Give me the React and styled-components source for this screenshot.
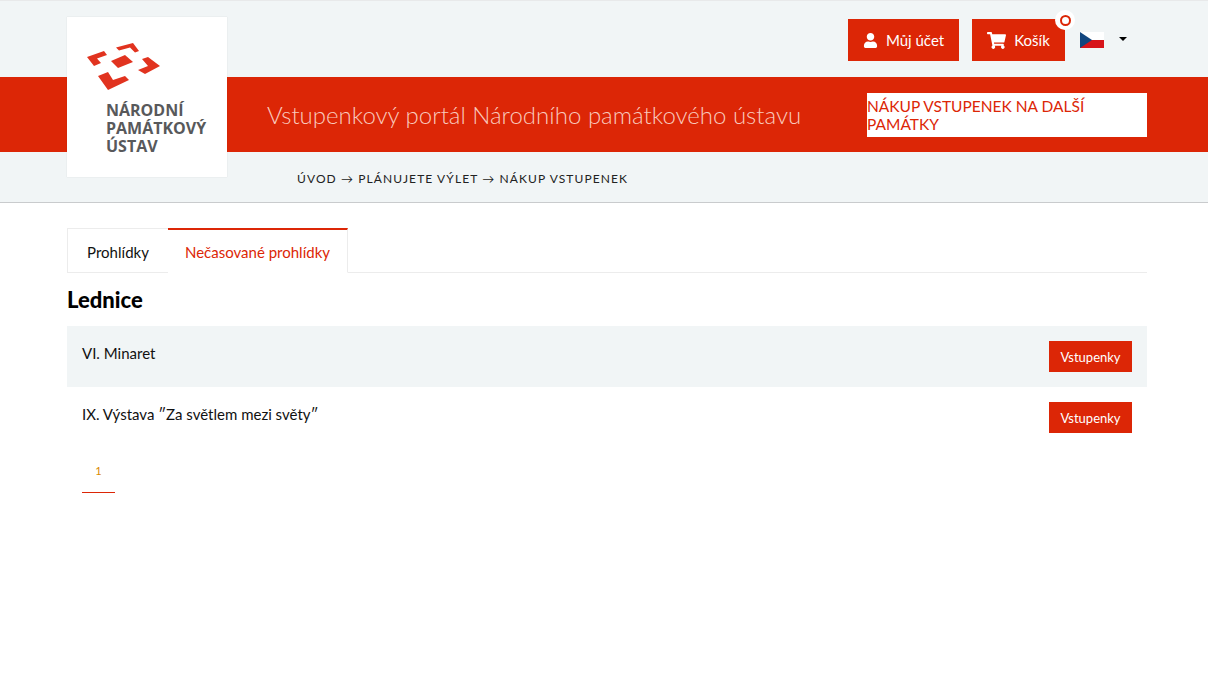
import React from "react";
import styled, { createGlobalStyle } from "styled-components";
import { FaUser, FaShoppingCart } from "react-icons/fa";

const RED = "#dc2606";
const PALE = "#f1f5f6";

const Global = createGlobalStyle`
  html, body { margin: 0; padding: 0; background: #fff; }
  body { font-family: "Lato", "Liberation Sans", sans-serif; color: #000; min-height: 680px; }
  * { box-sizing: border-box; }
`;

const Header = styled.header`
  position: relative;
  background: ${PALE};
  border-top: 1px solid #e8e9ea;
  border-bottom: 1px solid #c9cbcd;
  height: 203px;
`;
const Container = styled.div`
  width: 1080px;
  margin-left: 67px;
`;
const TopRow = styled(Container)`
  height: 76px;
  display: flex;
  justify-content: flex-end;
  padding-top: 18px;
`;
const Action = styled.a`
  height: 42px;
  background: ${RED};
  color: #fff;
  display: flex;
  align-items: center;
  font-size: 15px;
  gap: 8px;
  position: relative;
  padding: 0 15px;
  margin-right: ${(p) => p.$mr}px;
  svg { display: block; }
`;
const Badge = styled.span`
  position: absolute;
  top: -9px;
  right: -10px;
  width: 20px;
  height: 20px;
  border-radius: 50%;
  background: #fff;
  display: flex;
  align-items: center;
  justify-content: center;
  &::after {
    content: "";
    width: 7px;
    height: 7px;
    border-radius: 50%;
    border: 2px solid ${RED};
  }
`;
const Lang = styled.div`
  width: 52px;
  margin-right: 15px;
  display: flex;
  align-items: center;
  height: 42px;
  position: relative;
  gap: 15px;
  margin-right: 15px;
`;
const Caret = styled.span`
  width: 0;
  height: 0;
  border-left: 4px solid transparent;
  border-right: 4px solid transparent;
  border-top: 4px solid #000;
  margin-top: -2px;
`;
const Band = styled.div`
  background: ${RED};
  height: 75px;
`;
const BandInner = styled(Container)`
  height: 75px;
  display: flex;
  align-items: center;
  justify-content: space-between;
  padding-left: 200px;
`;
const Title = styled.h1`
  margin: 0;
  font-size: 24px;
  font-weight: 300;
  color: #f9c9bd;
`;
const OtherButton = styled.a`
  width: 280px;
  height: 44px;
  background: #fff;
  color: ${RED};
  font-size: 15.5px;
  display: flex;
  align-items: center;
  justify-content: center;
`;
const Crumbs = styled(Container)`
  padding: 20px 0 0 230px;
  font-size: 12px;
  letter-spacing: 1.1px;
  color: #222;
  line-height: 14px;
  text-transform: uppercase;
`;
const LogoBox = styled.div`
  position: absolute;
  left: 67px;
  top: 16px;
  width: 160px;
  height: 160px;
  background: #fff;
  box-shadow: 0 0 1px rgba(0, 0, 0, 0.15);
`;
const LogoMark = styled.svg`
  position: absolute;
  left: 13px;
  top: 18px;
  display: block;
`;
const LogoText = styled.div`
  position: absolute;
  left: 39px;
  top: 84px;
  font-family: "Open Sans", sans-serif;
  font-weight: 700;
  font-size: 16px;
  line-height: 18px;
  color: #58595b;
  white-space: nowrap;
`;
const Main = styled(Container)`
  padding-top: 25px;
`;
const Tabs = styled.nav`
  display: flex;
  height: 45px;
  border-bottom: 1px solid #ececec;
`;
const Tab = styled.a`
  height: 45px;
  display: flex;
  align-items: center;
  justify-content: center;
  font-size: 15px;
  width: ${(p) => p.$w}px;
  padding-top: 2px;
  border: 1px solid #ececec;
  border-left-width: ${(p) => (p.$active ? 0 : 1)}px;
  border-top: ${(p) => (p.$active ? `2px solid ${RED}` : "1px solid #ececec")};
  border-bottom-color: ${(p) => (p.$active ? "#fff" : "#ececec")};
  border-right-width: ${(p) => (p.$active ? 1 : 0)}px;
  color: ${(p) => (p.$active ? RED : "#111")};
`;
const Heading = styled.h2`
  margin: 0;
  height: 53px;
  display: flex;
  align-items: center;
  font-size: 22px;
  font-weight: 900;
  color: #000;
`;
const Row = styled.div`
  height: 61px;
  padding: 15px;
  display: flex;
  justify-content: space-between;
  align-items: flex-start;
  background: ${(p) => (p.$alt ? PALE : "#fff")};
`;
const RowName = styled.span`
  font-size: 15px;
  line-height: 24px;
  color: #111;
`;
const TicketButton = styled.a`
  width: 83px;
  height: 31px;
  background: ${RED};
  color: #fff;
  font-size: 13px;
  display: flex;
  align-items: center;
  justify-content: center;
`;
const Pager = styled.div`
  margin: 0 0 0 15px;
  width: 33px;
  height: 45px;
  border-bottom: 1px solid ${RED};
  color: #d98a00;
  font-size: 11px;
  display: flex;
  justify-content: center;
  padding-top: 16px;
`;

const Flag = () => (
  <svg width="24" height="16" viewBox="0 0 24 16" style={{ display: "block" }}>
    <rect width="24" height="8" fill="#fff" />
    <rect y="8" width="24" height="8" fill="#d7141a" />
    <path d="M0 0L12 8L0 16Z" fill="#11457e" />
  </svg>
);

export default function App() {
  return (
    <>
      <Global />
      <Header>
        <TopRow>
          <Action $mr={13}>
            <FaUser size={15} />
            Můj účet
          </Action>
          <Action $mr={15}>
            <FaShoppingCart size={19} />
            Košík
            <Badge />
          </Action>
          <Lang>
            <Flag />
            <Caret />
          </Lang>
        </TopRow>
        <Band>
          <BandInner>
            <Title>Vstupenkový portál Národního památkového ústavu</Title>
            <OtherButton>NÁKUP VSTUPENEK NA DALŠÍ PAMÁTKY</OtherButton>
          </BandInner>
        </Band>
        <Crumbs>Úvod → Plánujete výlet → Nákup vstupenek</Crumbs>
        <LogoBox>
          <LogoMark width="81" height="56" viewBox="0 0 81 56">
            <g fill="#e1331f">
              <path d="M7 22L24 16L27 20L17 23.5L21 28L14 31Z" />
              <path d="M36 12.5L53 8L59 16L55 17.5L50 12.5L39 15.5Z" />
              <path d="M31 26L45 20L53 27L38 33Z" />
              <path d="M62 24L68 22L80 31L65 39L58 35L68 31Z" />
              <path d="M18 41L28 37L33 45L45 41L49 45L28 55Z" />
            </g>
          </LogoMark>
          <LogoText>
            NÁRODNÍ
            <br />
            PAMÁTKOVÝ
            <br />
            ÚSTAV
          </LogoText>
        </LogoBox>
      </Header>
      <Main>
        <Tabs>
          <Tab $w={101}>Prohlídky</Tab>
          <Tab $w={180} $active>
            Nečasované prohlídky
          </Tab>
        </Tabs>
        <Heading>Lednice</Heading>
        <Row $alt>
          <RowName>VI. Minaret</RowName>
          <TicketButton>Vstupenky</TicketButton>
        </Row>
        <Row>
          <RowName>IX. Výstava ″Za světlem mezi světy″</RowName>
          <TicketButton>Vstupenky</TicketButton>
        </Row>
        <Pager>1</Pager>
      </Main>
    </>
  );
}
